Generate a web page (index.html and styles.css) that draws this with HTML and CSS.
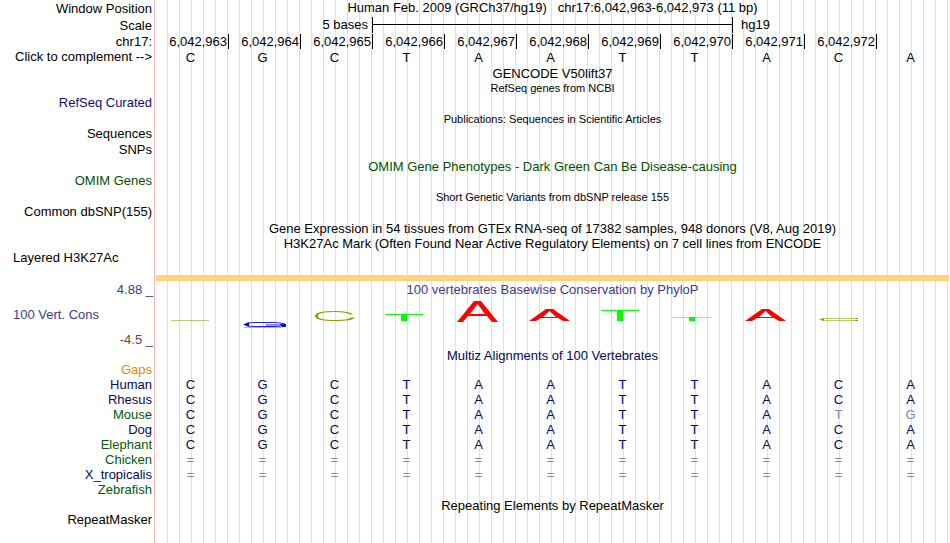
FILE: index.html
```
<!DOCTYPE html>
<html lang="en">
<head>
<meta charset="utf-8">
<title>chr17:6,042,963-6,042,973 - Genome Browser</title>
<link rel="stylesheet" href="styles.css">
</head>
<body>
<main class="browser">
  <header class="row position"><span class="label">Window Position</span><h1 class="title">Human Feb. 2009 (GRCh37/hg19) &nbsp; chr17:6,042,963-6,042,973 (11 bp)</h1></header>
  <div class="row scale"><span class="label">Scale</span>
    <div class="scale-track"><span class="scale-size">5 bases</span><span class="scale-bar"></span><span class="scale-db">hg19</span></div>
  </div>
  <div class="row ruler"><span class="label">chr17:</span>
    <div class="ticks"><span>6,042,963</span><span>6,042,964</span><span>6,042,965</span><span>6,042,966</span><span>6,042,967</span><span>6,042,968</span><span>6,042,969</span><span>6,042,970</span><span>6,042,971</span><span>6,042,972</span></div>
  </div>
  <div class="row sequence"><button type="button" class="label">Click to complement --&gt;</button>
    <div class="bases"><span>C</span><span>G</span><span>C</span><span>T</span><span>A</span><span>A</span><span>T</span><span>T</span><span>A</span><span>C</span><span>A</span></div>
  </div>
  <div class="row"><h2 class="title">GENCODE V50lift37</h2></div>
  <div class="row"><h2 class="title small">RefSeq genes from NCBI</h2></div>
  <div class="row"><span class="label blue">RefSeq Curated</span></div>
  <div class="row spaced"><h2 class="title small">Publications: Sequences in Scientific Articles</h2></div>
  <div class="row"><span class="label">Sequences</span></div>
  <div class="row spaced"><span class="label">SNPs</span></div>
  <div class="row spaced"><h2 class="title omim">OMIM Gene Phenotypes - Dark Green Can Be Disease-causing</h2></div>
  <div class="row"><span class="label omim">OMIM Genes</span></div>
  <div class="row spaced"><h2 class="title small">Short Genetic Variants from dbSNP release 155</h2></div>
  <div class="row"><span class="label">Common dbSNP(155)</span></div>
  <div class="row spaced"><h2 class="title">Gene Expression in 54 tissues from GTEx RNA-seq of 17382 samples, 948 donors (V8, Aug 2019)</h2></div>
  <div class="row"><h2 class="title">H3K27Ac Mark (Often Found Near Active Regulatory Elements) on 7 cell lines from ENCODE</h2></div>
  <div class="row"><span class="label start">Layered H3K27Ac</span></div>
  <div class="row"><div class="band"></div></div>

  <section class="row phylo">
    <div class="axis"><span class="phylo-blue">4.88 _</span><span class="phylo-blue name">100 Vert. Cons</span><span class="phylo-red">-4.5 _</span></div>
    <div class="phylo-track">
      <h2 class="title phylo-blue">100 vertebrates Basewise Conservation by PhyloP</h2>
      <div class="logo" role="img" aria-label="PhyloP conservation scores per base">
        <svg viewBox="0 0 72 36"><path class="c" opacity=".55" d="M16 23H54V24H16Z"/></svg>
        <svg viewBox="0 0 72 36"><path class="red-line" d="M17 30H54V31H17Z"/><path class="g" d="M58 27Q53 25.5 46 25.5H29Q18 25.5 18 27.500Q18 29.5 29 29.5H46Q56 29.5 57 28H39"/><path class="g-end" d="M16 27.5L22 25.500V29.500ZM53 27H59V30H55Z"/></svg>
        <svg viewBox="0 0 72 36"><path class="c" d="M54 17.500Q51 14 36 14Q16 14 16 19Q16 24 36 24Q54 24 56 20.500H52Q49 23 36 23Q19 23 19 19Q19 15 36 15Q48 15 51 17.500Z"/></svg>
        <svg viewBox="0 0 72 36"><path class="t" d="M14 17H52V18H36V24H30V18H14Z"/></svg>
        <svg viewBox="0 0 72 36"><path class="a" fill-rule="evenodd" d="M14 25L31 4H38L55 25H49L44 19H25L20 25ZM27 17H42L34.500 7Z"/></svg>
        <svg viewBox="0 0 72 36"><path class="a" fill-rule="evenodd" d="M14 24L31 12H38L55 24H48L43 21H26L21 24ZM28 20H41L34.500 14Z"/></svg>
        <svg viewBox="0 0 72 36"><path class="t" d="M14 13H52V14H36V24H30V14H14Z"/></svg>
        <svg viewBox="0 0 72 36"><path class="t" opacity=".5" d="M14 20H52V21H14Z"/><path class="t" d="M30 20H36V24H30Z"/></svg>
        <svg viewBox="0 0 72 36"><path class="a" fill-rule="evenodd" d="M14 24L31 12H38L55 24H48L43 21H26L21 24ZM28 20H41L34.500 14Z"/></svg>
        <svg viewBox="0 0 72 36"><path class="c" opacity=".55" d="M20 21H55V22H20ZM20 23H55V24H20Z"/><path class="c" d="M16 22.500L21 21V24ZM52 21H55V22H52ZM52 23H55V24H52Z"/></svg>
      </div>
    </div>
  </section>

  <div class="row"><h2 class="title align-blue">Multiz Alignments of 100 Vertebrates</h2></div>
  <div class="row compact"><span class="label gaps">Gaps</span></div>
  <table class="alignment">
    <tbody>
      <tr><th scope="row">Human</th><td>C</td><td>G</td><td>C</td><td>T</td><td>A</td><td>A</td><td>T</td><td>T</td><td>A</td><td>C</td><td>A</td></tr>
      <tr><th scope="row">Rhesus</th><td>C</td><td>G</td><td>C</td><td>T</td><td>A</td><td>A</td><td>T</td><td>T</td><td>A</td><td>C</td><td>A</td></tr>
      <tr><th scope="row" class="green">Mouse</th><td>C</td><td>G</td><td>C</td><td>T</td><td>A</td><td>A</td><td>T</td><td>T</td><td>A</td><td class="diff">T</td><td class="diff">G</td></tr>
      <tr><th scope="row">Dog</th><td>C</td><td>G</td><td>C</td><td>T</td><td>A</td><td>A</td><td>T</td><td>T</td><td>A</td><td>C</td><td>A</td></tr>
      <tr><th scope="row" class="green">Elephant</th><td>C</td><td>G</td><td>C</td><td>T</td><td>A</td><td>A</td><td>T</td><td>T</td><td>A</td><td>C</td><td>A</td></tr>
      <tr class="unaligned"><th scope="row" class="green">Chicken</th><td>=</td><td>=</td><td>=</td><td>=</td><td>=</td><td>=</td><td>=</td><td>=</td><td>=</td><td>=</td><td>=</td></tr>
      <tr class="unaligned"><th scope="row">X_tropicalis</th><td>=</td><td>=</td><td>=</td><td>=</td><td>=</td><td>=</td><td>=</td><td>=</td><td>=</td><td>=</td><td>=</td></tr>
      <tr><th scope="row" class="green">Zebrafish</th><td></td><td></td><td></td><td></td><td></td><td></td><td></td><td></td><td></td><td></td><td></td></tr>
    </tbody>
  </table>
  <div class="row spaced"><h2 class="title">Repeating Elements by RepeatMasker</h2></div>
  <div class="row"><span class="label">RepeatMasker</span></div>
</main>
</body>
</html>
```
FILE: styles.css
```
* { box-sizing: border-box; }

body {
  margin: 0;
  background: #fff;
  color: #000;
  font: 13px/15px "Liberation Sans", Arial, sans-serif;
}

/* The pink edge and the 12px guide lines run behind every track. */
.browser {
  min-height: 100vh;
  background:
    linear-gradient(#ffb4b4, #ffb4b4) 154px 0 / 1px 100% no-repeat,
    repeating-linear-gradient(to right, #dcdcff 0 1px, transparent 1px 12px) 167px 0 / calc(100% - 167px) 100% no-repeat;
}

.row {
  display: grid;
  grid-template-columns: 155px minmax(0, 1fr);
  align-items: start;
  min-height: 15px;
  white-space: nowrap;
}
.row > * { grid-row: 1; grid-column: 2; }
.row > .label, .row > .axis { grid-column: 1; }
.spaced { min-height: 16px; padding-top: 1px; }
.compact { min-height: 14px; }

.label {
  padding: 0 3px 0 0;
  border: 0;
  background: none;
  color: inherit;
  font: inherit;
  line-height: 13px;
  text-align: right;
}
button.label { cursor: pointer; }
.label.start { padding-left: 13px; text-align: left; }

.title {
  margin: 0;
  font: inherit;
  text-align: center;
}
.title.small { font-size: 11px; }

.position { min-height: 17px; }
.position .label { padding-top: 2px; }
.scale { align-items: center; }
.ruler { padding: 1px 0; }
.ruler .label { line-height: 15px; }
.sequence { min-height: 16px; }

.scale-track, .ticks, .bases, .logo {
  display: grid;
  grid-template-columns: repeat(11, minmax(0, 1fr));
}
.scale-track { padding: 0 2px 0 1px; }
.scale-size { grid-column: 1 / 4; padding-right: 4px; text-align: right; }
.scale-bar {
  grid-column: 4 / 9;
  height: 16px;
  margin-right: -1px;
  border: solid #000;
  border-width: 0 1px;
  background: linear-gradient(#000, #000) 0 7px / 100% 1px no-repeat;
}
.scale-db { grid-column: 9 / 12; padding-left: 9px; }

.ticks { padding: 0 1px 0 2px; }
.ticks span { padding-right: 1px; border-right: 1px solid #000; text-align: right; }
.bases { padding-right: 3px; text-align: center; }
.bases span { padding-right: 1px; }

.band { height: 6px; margin: 9px 1px 1px; background: #ffd280; }

.axis { display: flex; flex-direction: column; justify-content: space-between; height: 65px; padding-right: 2px; text-align: right; }
.axis .name { padding-left: 13px; text-align: left; }
.phylo { padding-bottom: 1px; }
.phylo-track { height: 65px; }
.logo { padding-right: 3px; }
.logo svg { width: 72px; height: 36px; }
.c { fill: #9b9b00; }
.g { fill: none; stroke: #2020ff; stroke-width: 1; }
.g-end { fill: #00f; }
.red-line { fill: #ff9696; }
.t { fill: #0f0; }
.a { fill: #f00; }

.blue { color: #0c0c78; }
.omim { color: #005000; }
.phylo-blue { color: #3c3c8c; }
.phylo-red { color: #783c3c; }
.align-blue { color: #000a64; }
.gaps { color: #dc8c14; }

.alignment {
  width: calc(100% - 3px);
  border-spacing: 0;
  table-layout: fixed;
  color: #000a64;
  text-align: center;
}
.alignment th { width: 155px; padding: 0 3px 0 0; font-weight: normal; text-align: right; }
.alignment td { height: 15px; padding: 0 1px 0 0; }
.alignment .green { color: #005a0a; }
.alignment .diff, .unaligned td { color: #8084b1; }
```
